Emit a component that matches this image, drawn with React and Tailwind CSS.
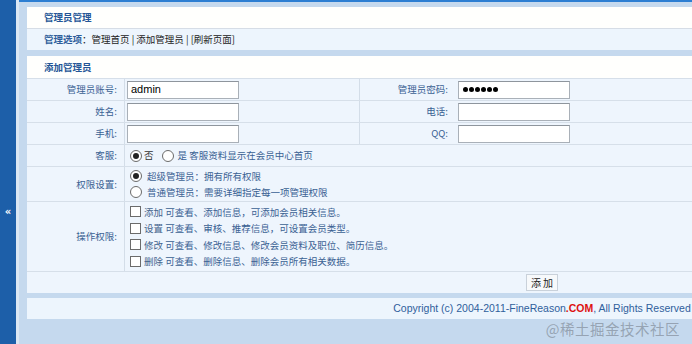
import React from "react";

const cjk = { fontFamily: '"Noto Sans CJK SC", "Noto Sans", sans-serif' };

function Radio({ checked }) {
    return (
        <span className="inline-flex w-[12px] h-[12px] rounded-full border border-[#6b6b6b] bg-white items-center justify-center shrink-0">
            {checked && <span className="w-[6px] h-[6px] rounded-full bg-[#222]" />}
        </span>
    );
}

function Check() {
    return <span className="inline-block w-[11px] h-[11px] border border-[#6b6b6b] bg-white shrink-0" />;
}

function TextInput({ value, password }) {
    return (
        <div className="w-[112px] h-[18px] bg-white border border-[#a9b0b8] border-t-[#8e959d] flex items-center px-[3px] text-[11px] text-black" style={{ fontFamily: '"Liberation Sans", sans-serif' }}>
            {password ? (
                <span className="flex gap-[1px] pl-[1px]">
                    {[0, 1, 2, 3, 4, 5].map((i) => (
                        <span key={i} className="w-[5px] h-[5px] rounded-full bg-black" />
                    ))}
                </span>
            ) : (
                value
            )}
        </div>
    );
}

function FieldRow({ l1, v1, l2, v2, pw }) {
    return (
        <div className="flex h-[22px] border-b border-[#d6dfe9]">
            <div className="w-[98px] border-r border-[#d3dde8] flex items-center justify-end pr-[7px] text-[#3a6193]">{l1}</div>
            <div className="w-[235px] border-r border-[#d3dde8] flex items-center pl-[2px]">
                <TextInput value={v1} />
            </div>
            <div className="w-[96px] flex items-center justify-end pr-[8px] text-[#3a6193]">{l2}</div>
            <div className="flex items-center pl-[2px]">
                <TextInput value={v2} password={pw} />
            </div>
        </div>
    );
}

const perms = [
    ["添加", "可查看、添加信息，可添加会员相关信息。"],
    ["设置", "可查看、审核、推荐信息，可设置会员类型。"],
    ["修改", "可查看、修改信息、修改会员资料及职位、简历信息。"],
    ["删除", "可查看、删除信息、删除会员所有相关数据。"],
];

export default function App() {
    return (
        <div className="relative w-[692px] h-[344px] overflow-hidden bg-[#c5d9ee] flex text-[9.5px]" style={cjk}>
            {/* left collapse bar */}
            <div className="w-[16px] bg-[#1d5fa9] flex justify-center pt-[207px] shrink-0">
                <span className="text-white text-[10px] font-bold leading-none" style={{ fontFamily: '"DejaVu Sans", sans-serif' }}>«</span>
            </div>
            <div className="w-[3px] bg-[#dbe7f4] shrink-0" />
            <div className="flex-1 flex flex-col">
                <div className="h-[2px] bg-[#2c7ed2]" />
                <div className="pl-[8px] pt-[5px] flex flex-col">
                    {/* header panel */}
                    <div className="w-[1030px] flex flex-col">
                        <div className="h-[22px] bg-[#fffffd] border-b border-[#d6dde6] flex items-center pl-[17px] font-bold text-[#245596]">
                            管理员管理
                        </div>
                        <div className="h-[21px] bg-[#edf5fd] flex items-center pl-[17px] text-[#222] whitespace-pre">
                            <span className="text-[#2e5d9a] font-bold">管理选项</span>：管理首页 | 添加管理员 | [刷新页面]
                        </div>
                    </div>

                    {/* form panel */}
                    <div className="w-[1030px] mt-[6px] flex flex-col">
                        <div className="h-[23px] bg-[#fffffd] flex items-center pl-[17px] font-bold text-[#245596] border-b border-[#d6dfe9]">
                            添加管理员
                        </div>
                        <div className="bg-[#eef5fd] flex flex-col">
                            <FieldRow l1="管理员账号:" v1="admin" l2="管理员密码:" v2="" pw />
                            <FieldRow l1="姓名:" v1="" l2="电话:" v2="" />
                            <FieldRow l1="手机:" v1="" l2="QQ:" v2="" />

                            <div className="flex h-[22px] border-b border-[#d6dfe9]">
                                <div className="w-[98px] border-r border-[#d3dde8] flex items-center justify-end pr-[7px] text-[#3a6193]">客服:</div>
                                <div className="flex items-center pl-[5px] gap-[2px]">
                                    <Radio checked />
                                    <span className="text-[#333] mr-[6px]">否</span>
                                    <Radio />
                                    <span className="text-[#3a6193] ml-[2px]">是 客服资料显示在会员中心首页</span>
                                </div>
                            </div>

                            <div className="flex h-[35px] border-b border-[#d6dfe9]">
                                <div className="w-[98px] border-r border-[#d3dde8] flex items-center justify-end pr-[7px] text-[#3a6193]">权限设置:</div>
                                <div className="flex flex-col justify-center pl-[5px] gap-[1px] text-[#3a6193]">
                                    <div className="flex items-center gap-[5px] h-[15px]">
                                        <Radio checked />
                                        <span>超级管理员：拥有所有权限</span>
                                    </div>
                                    <div className="flex items-center gap-[5px] h-[15px]">
                                        <Radio />
                                        <span>普通管理员：需要详细指定每一项管理权限</span>
                                    </div>
                                </div>
                            </div>

                            <div className="flex h-[70px] border-b border-[#d6dfe9]">
                                <div className="w-[98px] border-r border-[#d3dde8] flex items-center justify-end pr-[7px] text-[#3a6193]">操作权限:</div>
                                <div className="flex flex-col justify-center pl-[5px] text-[#3a6193]">
                                    {perms.map(([k, d]) => (
                                        <div key={k} className="flex items-center gap-[3px] h-[16.5px]">
                                            <Check />
                                            <span>
                                                <span className="text-[#44638c]">{k}</span> {d}
                                            </span>
                                        </div>
                                    ))}
                                </div>
                            </div>

                            <div className="h-[21px] flex items-center justify-center">
                                <button className="h-[17px] px-[4px] bg-[#f7f9fb] border border-[#c9d1da] text-[10px] text-[#222] leading-none">添 加</button>
                            </div>
                        </div>
                    </div>

                    {/* footer */}
                    <div className="w-[1030px] mt-[5px] h-[21px] bg-[#edf5fd] flex items-center justify-center text-[10.5px] text-[#2f609c]" style={{ fontFamily: '"Liberation Sans", sans-serif' }}>
                        Copyright (c) 2004-2011-FineReason<span className="text-[#d11] font-bold">.COM</span>, All Rights Reserved
                    </div>
                </div>
            </div>

            <div className="absolute right-[12px] bottom-[4px] text-[14.5px] text-[#8995a3]/80 tracking-[0.5px]">
                @稀土掘金技术社区
            </div>
        </div>
    );
}
